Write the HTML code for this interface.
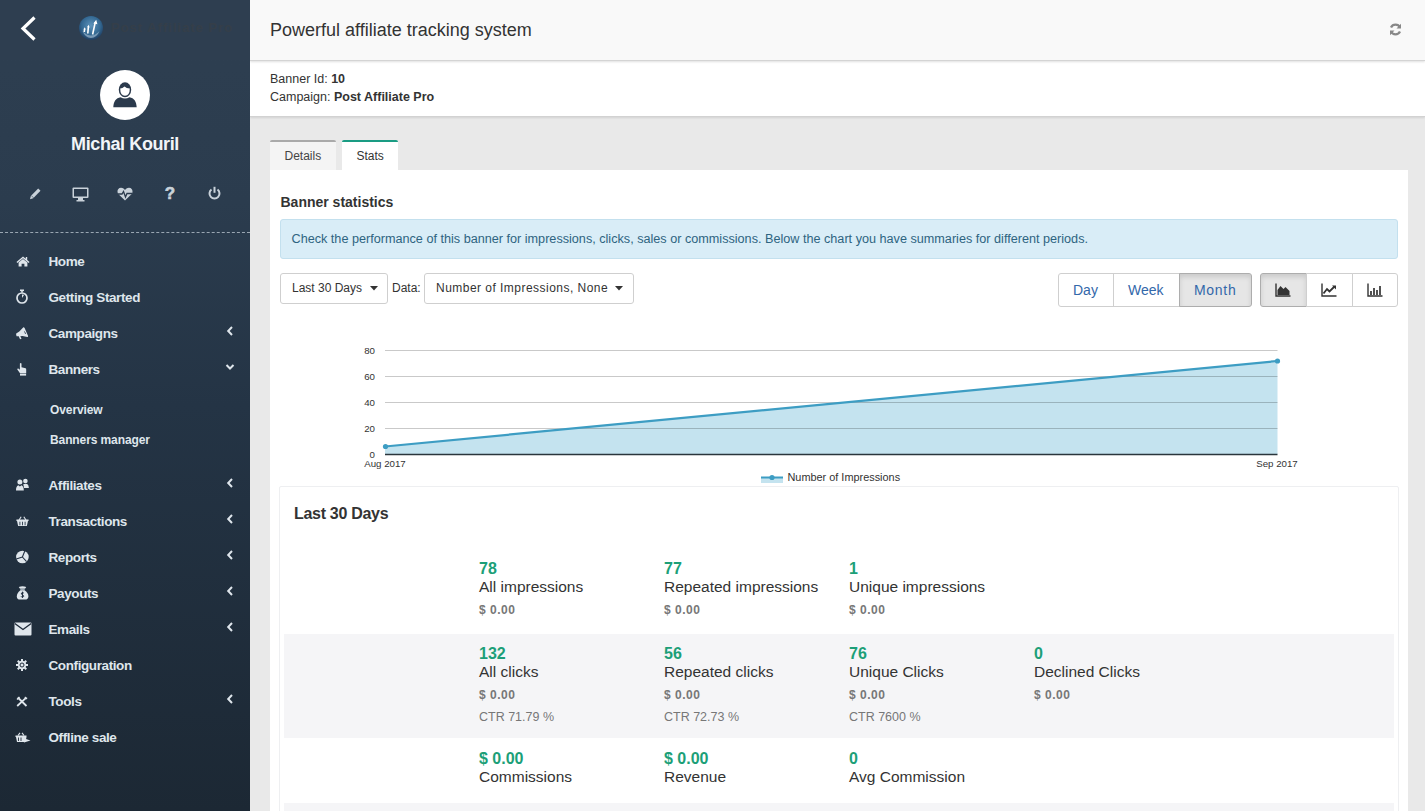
<!DOCTYPE html>
<html><head><meta charset="utf-8">
<style>
*{box-sizing:border-box;margin:0;padding:0}
html,body{width:1425px;height:811px;overflow:hidden;background:#e9e9e9;font-family:"Liberation Sans",sans-serif;position:relative}
.abs{position:absolute}
#side{position:absolute;left:0;top:0;width:250px;height:811px;background:linear-gradient(180deg,#2e3f51 0%,#2b3c4e 25%,#243445 50%,#1c2834 100%);overflow:hidden;z-index:5}
#side .top{position:absolute;left:0;top:0;width:250px;height:60px;background:#2e3e50}
.nav{position:absolute;left:48.5px;color:#dfe6ec;font-size:13.5px;font-weight:700;letter-spacing:-0.4px;white-space:nowrap;line-height:13px}
.sub{position:absolute;left:50px;color:#dfe6ec;font-size:12px;font-weight:700;letter-spacing:-0.1px;white-space:nowrap;line-height:12px}
#hdr{position:absolute;left:250px;top:0;width:1175px;height:61px;background:#f9f9f9;border-bottom:1px solid #d4d4d4;box-shadow:0 1px 2px rgba(0,0,0,.12);z-index:2}
#info{position:absolute;left:250px;top:61px;width:1175px;height:56px;background:#fff;border-bottom:1px solid #d2d2d2;box-shadow:0 1px 2px rgba(0,0,0,.10);z-index:1}
.t{position:absolute;white-space:nowrap}
#panel{position:absolute;left:270px;top:170px;width:1138px;height:660px;background:#fff}
.btn{position:absolute;border:1px solid #cfcfcf;border-radius:3px;background:#fff}
.num{position:absolute;color:#1c9f78;font-size:16px;font-weight:700;line-height:16px;white-space:nowrap}
.lbl{position:absolute;color:#333;font-size:15.5px;line-height:16px;white-space:nowrap}
.amt{position:absolute;color:#777;font-size:12px;font-weight:700;line-height:12px;white-space:nowrap;letter-spacing:0.5px}
.ctr{position:absolute;color:#777;font-size:12.5px;line-height:12px;white-space:nowrap}
.chev{position:absolute}

</style></head><body>

<div id="side">
  <div class="top"></div>
  <svg class="abs" style="left:19px;top:15px" width="18" height="28" viewBox="0 0 18 28"><path d="M15.5 2.5 L4 13.5 L15.5 24.5" fill="none" stroke="#fff" stroke-width="3.2"/></svg>
  <svg class="abs" style="left:78px;top:15px" width="26" height="26" viewBox="0 0 26 26">
    <defs><radialGradient id="lg" cx="50%" cy="40%" r="60%"><stop offset="0" stop-color="#5d93bb"/><stop offset="0.65" stop-color="#336892"/><stop offset="1" stop-color="#1f3d60"/></radialGradient></defs>
    <circle cx="13" cy="13" r="12" fill="url(#lg)"/>
    <path d="M4.5 16 Q13 25 21.5 16 Q19 22.5 13 23 Q7 22.5 4.5 16Z" fill="#b8cde0" opacity="0.55"/>
    <path d="M6.3 17 L6.6 13.8 M9.8 18.5 L10.4 11.5 M14.6 19.5 L17.2 7.5" stroke="#fff" stroke-width="1.6" fill="none"/>
    <path d="M5.6 14.2 L6.8 12.3 L7.7 14.5Z M9.3 12.1 L10.6 9.8 L11.6 12.4Z M15.4 8.6 L18.2 4.8 L19.4 9.2Z" fill="#fff"/>
  </svg>
  <div class="abs" style="left:111px;top:21px;font-size:13px;font-weight:700;line-height:14px;color:#383e47;white-space:nowrap;letter-spacing:1px;opacity:.7">Post Affiliate Pro</div>
  <div class="abs" style="left:100px;top:70px;width:50px;height:50px;border-radius:50%;background:#fff"></div>
  <svg class="abs" style="left:98px;top:68px" width="54" height="54" viewBox="0 0 54 54">
    <path d="M15.3 39.3 C15.6 33.5 18 30 22.5 29.3 Q27 31.8 31.5 29.3 C36 30 38.4 33.5 38.7 39.3 Z" fill="#2b3a4c"/>
    <ellipse cx="27" cy="21.7" rx="6.2" ry="7.5" fill="#2b3a4c"/>
    <path d="M22.2 20.5 Q24.5 20.5 26.5 18.6 Q28.5 20.6 31.8 20.6 Q31.8 27.7 27 27.8 Q22.2 27.7 22.2 20.5 Z" fill="#fff"/>
  </svg>
  <div class="abs" style="left:0;top:133.5px;width:250px;text-align:center;color:#f2f5f8;font-size:18px;font-weight:700;line-height:20px;white-space:nowrap;letter-spacing:-0.4px">Michal Kouril</div>
  <svg class="abs" style="left:29px;top:188px" width="12" height="12" viewBox="0 0 12 12"><path d="M9.2 0.5 L11.5 2.8 L4.2 10.2 L1 11.2 L1.8 8 Z" fill="#c9d2da"/><path d="M2.3 7.6 L4.6 9.9" stroke="#2a3a4c" stroke-width="0.6"/></svg>
  <svg class="abs" style="left:72px;top:186.5px" width="17" height="15" viewBox="0 0 17 15"><rect x="0.5" y="0.5" width="16" height="10.5" rx="1" fill="#c9d2da"/><rect x="2" y="2" width="13" height="7.5" fill="#2a3a4c"/><rect x="6" y="11" width="5" height="2.5" fill="#c9d2da"/><rect x="4.5" y="13" width="8" height="1.5" fill="#c9d2da"/></svg>
  <svg class="abs" style="left:117px;top:187px" width="16" height="14" viewBox="0 0 16 14"><path d="M8 13.5 L1.5 7.3 C-0.5 5 0.5 0.8 4 0.8 C6 0.8 7.3 2 8 3 C8.7 2 10 0.8 12 0.8 C15.5 0.8 16.5 5 14.5 7.3 Z" fill="#c9d2da"/><path d="M1 7 H5 L6.5 4.5 L8.5 10 L10 6.5 H15" stroke="#2a3a4c" stroke-width="1.3" fill="none"/></svg>
  <div class="abs" style="left:162px;top:186px;width:16px;text-align:center;color:#c9d2da;font-size:17px;font-weight:700;line-height:16px;-webkit-text-stroke:0.6px #c9d2da">?</div>
  <svg class="abs" style="left:208px;top:186px" width="13" height="14" viewBox="0 0 13 14"><path d="M3.5 3.5 A5 5 0 1 0 9.5 3.5" fill="none" stroke="#c9d2da" stroke-width="2"/><path d="M6.5 0.8 V6.8" stroke="#c9d2da" stroke-width="2"/></svg>
  <div class="abs" style="left:0;top:232px;width:250px;height:1px;border-top:1px dashed #9aa6b2"></div>
  <div class="nav" style="top:255px">Home</div>
<div class="nav" style="top:291px">Getting Started</div>
<div class="nav" style="top:327px">Campaigns</div>
<svg class="chev" style="left:226px;top:326px;width:8px;height:10px" viewBox="0 0 8 10"><path d="M6 1 L2.2 5 L6 9" fill="none" stroke="#dfe6ec" stroke-width="2"/></svg>
<div class="nav" style="top:363px">Banners</div>
<svg class="chev" style="left:225px;top:363px;width:10px;height:8px" viewBox="0 0 10 8"><path d="M1.5 2 L5 5.5 L8.5 2" fill="none" stroke="#dfe6ec" stroke-width="2"/></svg>
<div class="nav" style="top:479px">Affiliates</div>
<svg class="chev" style="left:226px;top:478px;width:8px;height:10px" viewBox="0 0 8 10"><path d="M6 1 L2.2 5 L6 9" fill="none" stroke="#dfe6ec" stroke-width="2"/></svg>
<div class="nav" style="top:515px">Transactions</div>
<svg class="chev" style="left:226px;top:514px;width:8px;height:10px" viewBox="0 0 8 10"><path d="M6 1 L2.2 5 L6 9" fill="none" stroke="#dfe6ec" stroke-width="2"/></svg>
<div class="nav" style="top:551px">Reports</div>
<svg class="chev" style="left:226px;top:550px;width:8px;height:10px" viewBox="0 0 8 10"><path d="M6 1 L2.2 5 L6 9" fill="none" stroke="#dfe6ec" stroke-width="2"/></svg>
<div class="nav" style="top:587px">Payouts</div>
<svg class="chev" style="left:226px;top:586px;width:8px;height:10px" viewBox="0 0 8 10"><path d="M6 1 L2.2 5 L6 9" fill="none" stroke="#dfe6ec" stroke-width="2"/></svg>
<div class="nav" style="top:623px">Emails</div>
<svg class="chev" style="left:226px;top:622px;width:8px;height:10px" viewBox="0 0 8 10"><path d="M6 1 L2.2 5 L6 9" fill="none" stroke="#dfe6ec" stroke-width="2"/></svg>
<div class="nav" style="top:659px">Configuration</div>
<div class="nav" style="top:695px">Tools</div>
<svg class="chev" style="left:226px;top:694px;width:8px;height:10px" viewBox="0 0 8 10"><path d="M6 1 L2.2 5 L6 9" fill="none" stroke="#dfe6ec" stroke-width="2"/></svg>
<div class="nav" style="top:731px">Offline sale</div>
  <div class="sub" style="top:404px">Overview</div>
  <div class="sub" style="top:434px">Banners manager</div>
  
<svg class="abs" style="left:15.5px;top:255.5px" width="14" height="11" viewBox="0 0 15 12" preserveAspectRatio="none"><path d="M7.5 0.5 L0.5 6.5 L1.5 7.5 L7.5 2.5 L13.5 7.5 L14.5 6.5 L12 4.3 V1 H10.5 V3 Z M2.8 7 V11.5 H6 V8.5 H9 V11.5 H12.2 V7 L7.5 3.2 Z" fill="#dfe6ec"/></svg>
<svg class="abs" style="left:15px;top:289px" width="14" height="15" viewBox="0 0 14 15"><rect x="5" y="0.5" width="4" height="1.6" fill="#dfe6ec"/><rect x="6.2" y="1.5" width="1.6" height="2" fill="#dfe6ec"/><circle cx="7" cy="9" r="5" fill="none" stroke="#dfe6ec" stroke-width="1.7"/><path d="M7 9 L7 5.5 L9.2 5.8 Z" fill="#dfe6ec"/></svg>
<svg class="abs" style="left:12px;top:322px" width="22" height="22" viewBox="0 0 22 22"><path d="M4.2 11.6 L7.3 9.6 L11.4 5.3 Q12.2 5.2 12.6 6 L16.1 14 Q16.2 15 15.3 14.9 L10.6 14.1 L7.5 14.3 L4.6 14.2 Q3.9 13 4.2 11.6 Z" fill="#dfe6ec"/><path d="M7.4 14 L8.8 17" stroke="#dfe6ec" stroke-width="1.6"/><path d="M12 9.5 Q13.5 10 13.5 12" stroke="#2a3a4c" stroke-width="0.8" fill="none"/></svg>
<svg class="abs" style="left:12px;top:358px" width="22" height="22" viewBox="0 0 22 22"><path d="M7.9 5.6 Q8.7 4.4 9.5 5.6 V9.2 L13.6 10.3 Q14.3 10.6 14.2 11.6 V15.2 H8 L5.3 11.6 Q5.1 10.3 6.3 10.5 L7.9 11.8 Z" fill="#dfe6ec"/><rect x="8" y="15.7" width="6.1" height="1.9" fill="#dfe6ec"/></svg>
<svg class="abs" style="left:12px;top:474px" width="22" height="22" viewBox="0 0 22 22"><circle cx="13.4" cy="7" r="2.3" fill="#dfe6ec"/><path d="M11.2 10.2 Q13.4 9.4 15.2 10 Q16.8 11 16.9 14.1 H12 Q11.8 11.8 11.2 10.2Z" fill="#dfe6ec"/><circle cx="7.9" cy="8" r="2.5" fill="#dfe6ec"/><path d="M4 16.5 Q3.8 12.5 6.3 11.2 L7.9 12.5 L9.5 11.2 Q11.9 12.5 11.8 16.5 Z" fill="#dfe6ec"/></svg>
<svg class="abs" style="left:16px;top:515.5px" width="13" height="10.6" viewBox="0 0 15 12" preserveAspectRatio="none"><path d="M3.5 4.5 L6 0.8 M11.5 4.5 L9 0.8" stroke="#dfe6ec" stroke-width="1.3" fill="none"/><path d="M0.5 4 H14.5 V5.8 H13.8 L12.5 11.5 H2.5 L1.2 5.8 H0.5 Z" fill="#dfe6ec"/><path d="M4.5 6.5 V10.5 M7.5 6.5 V10.5 M10.5 6.5 V10.5" stroke="#233143" stroke-width="1"/></svg>
<svg class="abs" style="left:15px;top:550px" width="14" height="14" viewBox="0 0 14 14"><circle cx="7.4" cy="7" r="6.3" fill="#dfe6ec"/><path d="M7.4 7 L9.8 1 M7.4 7 L1.3 9 M7.4 7 L11.6 11.6" stroke="#233143" stroke-width="1.1" fill="none"/></svg>
<svg class="abs" style="left:12px;top:582px" width="22" height="22" viewBox="0 0 22 22"><path d="M6.8 5 Q10.5 3.4 14.2 5 Q13.6 6.4 12.6 6.8 H8.4 Q7.4 6.4 6.8 5Z" fill="#dfe6ec"/><rect x="8.3" y="6.8" width="4.4" height="1.5" fill="#9aa7b2"/><path d="M8.3 8.2 H12.7 Q16.5 11 16.4 14.5 Q16.3 17.6 13 17.6 H8 Q4.8 17.6 4.8 14.5 Q4.8 11 8.3 8.2Z" fill="#dfe6ec"/><path d="M11.8 11.2 Q11.2 10.4 10.3 10.5 Q9.2 10.8 9.4 11.9 Q9.7 12.7 10.6 13 Q11.8 13.4 11.7 14.3 Q11.4 15.2 10.2 15.1 Q9.4 15 9 14.3 M10.5 9.7 V15.9" stroke="#233143" stroke-width="1" fill="none"/></svg>
<svg class="abs" style="left:14px;top:622px" width="18" height="14" viewBox="0 0 18 14"><rect x="0.5" y="0.5" width="17" height="13" rx="1" fill="#dfe6ec"/><path d="M0.8 1.5 L9 7.5 L17.2 1.5" stroke="#1f2b3a" stroke-width="1.4" fill="none"/></svg>
<svg class="abs" style="left:16px;top:659px" width="12" height="12" viewBox="0 0 12 12"><g fill="#dfe6ec"><circle cx="6" cy="6" r="4.2"/><rect x="5" y="0" width="2" height="12"/><rect x="0" y="5" width="12" height="2"/><rect x="5" y="0" width="2" height="12" transform="rotate(45 6 6)"/><rect x="5" y="0" width="2" height="12" transform="rotate(-45 6 6)"/></g><circle cx="6" cy="6" r="2" fill="none" stroke="#1f2b3a" stroke-width="1"/></svg>
<svg class="abs" style="left:16px;top:696px" width="12" height="11" viewBox="0 0 12 11"><path d="M1.2 10 L10 1.8 M1.8 1.5 L10.5 10" stroke="#dfe6ec" stroke-width="1.8" fill="none"/><path d="M0.5 3 L3 0.5 L4 1.5 L1.5 4Z M9 0.5 L11.5 2 L10.5 3.5 L8.5 2Z" fill="#dfe6ec"/></svg>
<svg class="abs" style="left:15px;top:732px" width="16" height="11" viewBox="0 0 16 11"><path d="M3 3.5 L5 0.8 M9 3.5 L7 0.8" stroke="#dfe6ec" stroke-width="1.1" fill="none"/><path d="M0.5 3.5 H11.5 V5 L10.5 10 H2 L1 5 H0.5Z" fill="#dfe6ec"/><path d="M8 6 L15.5 8.5 L9 10.5 Z" fill="#dfe6ec"/><path d="M3.5 5.5 V9 M6 5.5 V9" stroke="#1f2b3a" stroke-width="0.9"/></svg>

</div>


<div id="hdr">
  <div class="t" style="left:20px;top:21px;font-size:18px;line-height:18px;color:#333">Powerful affiliate tracking system</div>
  <svg class="abs" style="left:1139px;top:22.5px" width="13" height="13" viewBox="0 0 13 13"><path d="M11 4.5 A5 5 0 0 0 2 4.5" fill="none" stroke="#888" stroke-width="2.3"/><path d="M12 0.8 V5.5 H7.5Z" fill="#888"/><path d="M2 8.5 A5 5 0 0 0 11 8.5" fill="none" stroke="#888" stroke-width="2.3"/><path d="M1 12.2 V7.5 H5.5Z" fill="#888"/></svg>
</div>
<div id="info">
  <div class="t" style="left:20px;top:12px;font-size:12.5px;line-height:12px;color:#333">Banner Id: <b>10</b></div>
  <div class="t" style="left:20px;top:30px;font-size:12.5px;line-height:12px;color:#333">Campaign: <b>Post Affiliate Pro</b></div>
</div>


<div class="abs" style="left:270px;top:140px;width:66px;height:30px;background:#f4f4f4;border-top:2px solid #aaa;border-radius:2px 2px 0 0"></div>
<div class="t" style="left:284.5px;top:150px;font-size:12px;line-height:12px;color:#444">Details</div>
<div class="abs" style="left:342px;top:140px;width:56px;height:31px;background:#fff;border-top:2px solid #1a9c83;border-radius:2px 2px 0 0"></div>
<div class="t" style="left:356.5px;top:150px;font-size:12px;line-height:12px;color:#333">Stats</div>
<div id="panel"></div>
<div class="t" style="left:280.5px;top:195px;font-size:14px;font-weight:700;line-height:14px;color:#333">Banner statistics</div>
<div class="abs" style="left:280px;top:219px;width:1118px;height:40px;background:#d9edf7;border:1px solid #c3e0ee;border-radius:3px"></div>
<div class="t" style="left:291.5px;top:232.5px;font-size:12.65px;line-height:12px;color:#2e6481">Check the performance of this banner for impressions, clicks, sales or commissions. Below the chart you have summaries for different periods.</div>
<div class="btn" style="left:280px;top:273px;width:108px;height:31px"></div>
<div class="t" style="left:292px;top:282px;font-size:12px;line-height:12px;color:#333">Last 30 Days</div>
<svg class="abs" style="left:370px;top:286px" width="8" height="5" viewBox="0 0 8 5"><path d="M0 0 H8 L4 4.5Z" fill="#333"/></svg>
<div class="t" style="left:392px;top:282px;font-size:12px;line-height:12px;color:#333">Data:</div>
<div class="btn" style="left:424px;top:273px;width:210px;height:31px"></div>
<div class="t" style="left:436px;top:282px;font-size:12px;line-height:12px;color:#333;letter-spacing:0.47px">Number of Impressions, None</div>
<svg class="abs" style="left:615px;top:286px" width="8" height="5" viewBox="0 0 8 5"><path d="M0 0 H8 L4 4.5Z" fill="#333"/></svg>
<div class="btn" style="left:1058px;top:273px;width:56px;height:34px;border-radius:3px 0 0 3px"></div>
<div class="btn" style="left:1113px;top:273px;width:67px;height:34px;border-radius:0"></div>
<div class="btn" style="left:1179px;top:273px;width:73px;height:34px;border-radius:0 3px 3px 0;background:#e6e6e6;border-color:#adadad;box-shadow:inset 0 3px 5px rgba(0,0,0,.12)"></div>
<div class="t" style="left:1073px;top:283px;font-size:14px;line-height:14px;color:#3368aa">Day</div>
<div class="t" style="left:1128px;top:283px;font-size:14px;line-height:14px;color:#3368aa">Week</div>
<div class="t" style="left:1194px;top:283px;font-size:14px;line-height:14px;color:#3368aa;letter-spacing:0.7px">Month</div>
<div class="btn" style="left:1260px;top:273px;width:47px;height:34px;border-radius:3px 0 0 3px;background:#e6e6e6;border-color:#adadad;box-shadow:inset 0 3px 5px rgba(0,0,0,.12)"></div>
<div class="btn" style="left:1306px;top:273px;width:47px;height:34px;border-radius:0"></div>
<div class="btn" style="left:1352px;top:273px;width:46px;height:34px;border-radius:0 3px 3px 0"></div>
<svg class="abs" style="left:1275px;top:283px" width="16" height="14" viewBox="0 0 16 14"><path d="M1 0.5 V13 H15.5" stroke="#333" stroke-width="1.4" fill="none"/><path d="M2.5 12 V7 L5.5 3 L8.5 6 L10.5 4 L14.5 8 V12Z" fill="#333"/></svg>
<svg class="abs" style="left:1321px;top:283px" width="16" height="14" viewBox="0 0 16 14"><path d="M1 0.5 V13 H15.5" stroke="#333" stroke-width="1.4" fill="none"/><path d="M2.5 10.5 L6 6 L8.5 8.5 L13.5 3.5" stroke="#333" stroke-width="1.8" fill="none"/><path d="M11 2.5 H15 V6.5Z" fill="#333"/></svg>
<svg class="abs" style="left:1367px;top:283px" width="16" height="14" viewBox="0 0 16 14"><path d="M1 0.5 V13 H15.5" stroke="#333" stroke-width="1.4" fill="none"/><path d="M4 12 V8 M7 12 V5 M10 12 V7 M13 12 V3" stroke="#333" stroke-width="1.7" fill="none"/></svg>

<svg class="abs" style="left:0;top:0" width="1425" height="811" viewBox="0 0 1425 811">
  <path d="M385 446.5 L1277.5 361 L1277.5 454 L385 454 Z" fill="#c4e3ef"/>
  <g stroke="#000" stroke-opacity="0.21" stroke-width="1">
    <line x1="385" y1="350.5" x2="1277.5" y2="350.5"/>
    <line x1="385" y1="376.5" x2="1277.5" y2="376.5"/>
    <line x1="385" y1="402.5" x2="1277.5" y2="402.5"/>
    <line x1="385" y1="428.5" x2="1277.5" y2="428.5"/>
  </g>
  <path d="M385 446.5 L1277.5 361" stroke="#3d9dc3" stroke-width="2.2" fill="none"/>
  <circle cx="385.5" cy="446.5" r="2.6" fill="#3d9dc3"/>
  <circle cx="1277.5" cy="361" r="2.6" fill="#3d9dc3"/>
  <line x1="385" y1="454.5" x2="1277.5" y2="454.5" stroke="#2a363c" stroke-width="1.3"/>
  <g font-family="Liberation Sans" font-size="9.7" fill="#333" text-anchor="end">
    <text x="375" y="353.7">80</text><text x="375" y="379.7">60</text><text x="375" y="405.7">40</text><text x="375" y="431.7">20</text><text x="375" y="457.7">0</text>
  </g>
  <g font-family="Liberation Sans" font-size="9.7" fill="#333" text-anchor="middle">
    <text x="385" y="466.8">Aug 2017</text><text x="1277" y="466.8">Sep 2017</text>
  </g>
  <rect x="761" y="477.5" width="22" height="5.5" fill="#c4e3ef"/>
  <line x1="761" y1="477.5" x2="783" y2="477.5" stroke="#3d9dc3" stroke-width="2"/>
  <circle cx="772" cy="477.5" r="2.6" fill="#3d9dc3"/>
  <text x="787.5" y="480.7" font-family="Liberation Sans" font-size="10.9" fill="#333">Number of Impressions</text>
</svg>

<div class="abs" style="left:279px;top:486px;width:1120px;height:340px;border:1px solid #eeeff1;border-radius:2px;background:#fff"></div><div class="t" style="left:294px;top:506px;font-size:16px;font-weight:700;line-height:16px;color:#333;letter-spacing:-0.3px">Last 30 Days</div><div class="abs" style="left:284px;top:634px;width:1110px;height:104px;background:#f5f5f7"></div><div class="abs" style="left:284px;top:803px;width:1110px;height:20px;background:#f5f5f7"></div><div class="num" style="left:479px;top:561px">78</div><div class="lbl" style="left:479px;top:579px">All impressions</div><div class="amt" style="left:479px;top:604px">$ 0.00</div><div class="num" style="left:664px;top:561px">77</div><div class="lbl" style="left:664px;top:579px">Repeated impressions</div><div class="amt" style="left:664px;top:604px">$ 0.00</div><div class="num" style="left:849px;top:561px">1</div><div class="lbl" style="left:849px;top:579px">Unique impressions</div><div class="amt" style="left:849px;top:604px">$ 0.00</div><div class="num" style="left:479px;top:646px">132</div><div class="lbl" style="left:479px;top:664px">All clicks</div><div class="amt" style="left:479px;top:689px">$ 0.00</div><div class="ctr" style="left:479px;top:711px">CTR 71.79 %</div><div class="num" style="left:664px;top:646px">56</div><div class="lbl" style="left:664px;top:664px">Repeated clicks</div><div class="amt" style="left:664px;top:689px">$ 0.00</div><div class="ctr" style="left:664px;top:711px">CTR 72.73 %</div><div class="num" style="left:849px;top:646px">76</div><div class="lbl" style="left:849px;top:664px">Unique Clicks</div><div class="amt" style="left:849px;top:689px">$ 0.00</div><div class="ctr" style="left:849px;top:711px">CTR 7600 %</div><div class="num" style="left:1034px;top:646px">0</div><div class="lbl" style="left:1034px;top:664px">Declined Clicks</div><div class="amt" style="left:1034px;top:689px">$ 0.00</div><div class="num" style="left:479px;top:751px">$ 0.00</div><div class="lbl" style="left:479px;top:769px">Commissions</div><div class="num" style="left:664px;top:751px">$ 0.00</div><div class="lbl" style="left:664px;top:769px">Revenue</div><div class="num" style="left:849px;top:751px">0</div><div class="lbl" style="left:849px;top:769px">Avg Commission</div>

</body></html>
